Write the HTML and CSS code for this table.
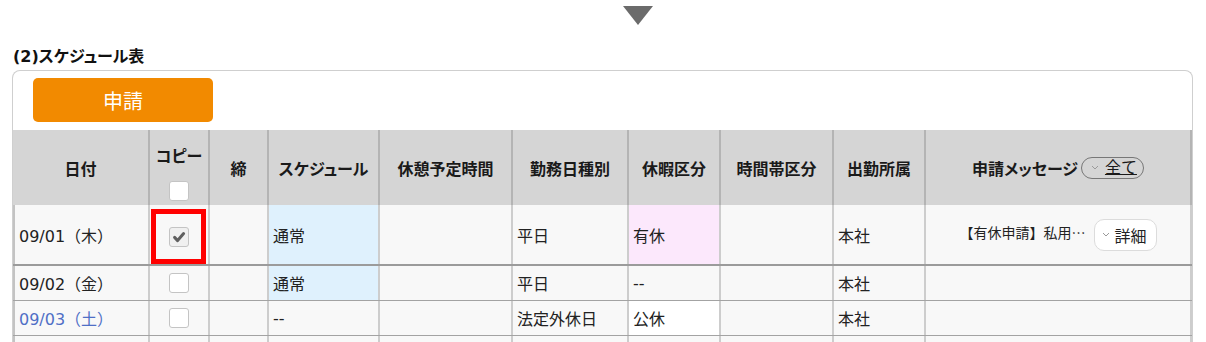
FILE: index.html
```html
<!DOCTYPE html>
<html lang="ja">
<head>
<meta charset="utf-8">
<title>スケジュール表</title>
<link rel="stylesheet" href="styles.css">
</head>
<body>
<div class="arrow"></div>
<h2 class="title">(2)スケジュール表</h2>
<div class="panel">
  <div class="actions"><button class="apply">申請</button></div>
  <div class="table">
    <div class="row head">
      <div class="th">日付</div>
      <div class="th th-copy"><span class="th-label">コピー</span><span class="cb"></span></div>
      <div class="th">締</div>
      <div class="th">スケジュール</div>
      <div class="th">休憩予定時間</div>
      <div class="th">勤務日種別</div>
      <div class="th">休暇区分</div>
      <div class="th">時間帯区分</div>
      <div class="th">出勤所属</div>
      <div class="th th-msg">申請メッセージ<span class="pill"><svg class="chev" width="8" height="5" viewBox="0 0 8 5"><polyline points="1,1 4,4 7,1" fill="none" stroke="#9a9a9a" stroke-width="1"/></svg><span class="pill-text">全て</span></span></div>
    </div>
    <div class="row body r1">
      <div class="td">09/01（木）</div>
      <div class="td center copy-cell">
        <span class="cb checked"><svg width="18" height="18" viewBox="0 0 18 18"><path d="M4.6 9.4 L7.6 12.6 L13.6 5.6" fill="none" stroke="#5f5f5f" stroke-width="3" stroke-linecap="round" stroke-linejoin="round"/></svg></span>
        <span class="highlight"></span>
      </div>
      <div class="td"></div>
      <div class="td blue">通常</div>
      <div class="td"></div>
      <div class="td">平日</div>
      <div class="td pink">有休</div>
      <div class="td"></div>
      <div class="td">本社</div>
      <div class="td msg"><span class="msg-text">【有休申請】私用…</span><span class="detail"><svg class="chev" width="8" height="5" viewBox="0 0 8 5"><polyline points="1,1 4,4 7,1" fill="none" stroke="#9a9a9a" stroke-width="1"/></svg>詳細</span></div>
    </div>
    <div class="row body r2">
      <div class="td">09/02（金）</div>
      <div class="td center"><span class="cb"></span></div>
      <div class="td"></div>
      <div class="td blue">通常</div>
      <div class="td"></div>
      <div class="td">平日</div>
      <div class="td">--</div>
      <div class="td"></div>
      <div class="td">本社</div>
      <div class="td"></div>
    </div>
    <div class="row body r3">
      <div class="td sat">09/03（土）</div>
      <div class="td center"><span class="cb"></span></div>
      <div class="td"></div>
      <div class="td">--</div>
      <div class="td"></div>
      <div class="td">法定外休日</div>
      <div class="td white">公休</div>
      <div class="td"></div>
      <div class="td">本社</div>
      <div class="td"></div>
    </div>
    <div class="row body r4">
      <div class="td"></div>
      <div class="td"></div>
      <div class="td"></div>
      <div class="td"></div>
      <div class="td"></div>
      <div class="td"></div>
      <div class="td"></div>
      <div class="td"></div>
      <div class="td"></div>
      <div class="td"></div>
    </div>
  </div>
</div>
</body>
</html>
```

FILE: styles.css
```css
body {
  margin: 0;
  background: #fff;
  color: #222;
  font-family: "DejaVu Sans", "Noto Sans CJK JP", sans-serif;
}

.arrow {
  width: 0;
  height: 0;
  margin: 6px 0 0 623px;
  border-left: 15px solid transparent;
  border-right: 15px solid transparent;
  border-top: 19px solid #6b6b6b;
}

.title {
  margin: 21px 0 2px 13px;
  font-size: 16px;
  line-height: 22px;
  font-weight: bold;
  font-feature-settings: "palt";
  color: #111;
}

.panel {
  margin-left: 12px;
  width: 1181px;
  box-sizing: border-box;
  border: 1px solid #cfcfcf;
  border-bottom: none;
  border-radius: 8px 8px 0 0;
}

.actions {
  padding: 7px 20px 8px;
}

.apply {
  width: 180px;
  height: 44px;
  border: none;
  border-radius: 5px;
  background: #f28a00;
  color: #fff;
  font-family: inherit;
  font-size: 20px;
  display: flex;
  align-items: center;
  justify-content: center;
  padding: 0;
}

.row {
  display: grid;
  grid-template-columns: 137px 60px 59px 111px 133px 116px 92px 113px 92px 266px;
  box-sizing: border-box;
}

.head {
  height: 75px;
  background: #d5d5d5;
}

.th {
  border-right: 2px solid #b4b4b4;
  display: flex;
  align-items: center;
  justify-content: center;
  font-weight: bold;
  font-size: 16px;
  font-feature-settings: "palt";
  color: #1a1a1a;
}

.th-msg {
  gap: 3px;
}

.th-copy {
  flex-direction: column;
  justify-content: flex-start;
  padding-top: 16px;
}

.th-label {
  line-height: 22px;
  margin-bottom: 13px;
}

.pill {
  display: inline-flex;
  align-items: center;
  height: 22px;
  box-sizing: border-box;
  padding: 0 6px 0 9px;
  border: 1px solid #777;
  border-radius: 11px;
  font-weight: normal;
  font-feature-settings: normal;
}

.pill-text {
  margin-left: 6px;
  text-decoration: underline;
  line-height: 18px;
}

.chev {
  display: block;
}

.body {
  background: #f8f8f8;
}

.td {
  border-right: 2px solid #cdcdcd;
  display: flex;
  align-items: center;
  padding: 0 4px;
  font-size: 16px;
  box-sizing: border-box;
}

.td:first-child {
  border-left: 2px solid #c3c3c3;
}

.r1 {
  height: 61px;
  border-bottom: 2px solid #9b9b9b;
}

.r2,
.r3 {
  height: 35px;
  border-bottom: 1px solid #a3a3a3;
}

.r4 {
  height: 35px;
}

.center {
  justify-content: center;
}

.copy-cell {
  position: relative;
  padding-top: 5px;
}

.highlight {
  position: absolute;
  top: 4px;
  left: 1px;
  width: 55px;
  height: 55px;
  box-sizing: border-box;
  border: 5px solid #ff0000;
}

.cb {
  display: flex;
  align-items: center;
  justify-content: center;
  width: 20px;
  height: 20px;
  box-sizing: border-box;
  border: 1px solid #c4c4c4;
  border-radius: 3px;
  background: #fff;
}

.cb.checked {
  background: #f0f0f0;
}

.blue {
  background: #dff1fd;
}

.pink {
  background: #fce8fc;
}

.white {
  background: #fff;
}

.sat {
  color: #4f6fc6;
}

.msg {
  justify-content: center;
  gap: 9px;
}

.msg-text {
  font-family: "Noto Sans CJK JP", sans-serif;
  font-size: 14px;
  margin-bottom: 6px;
}

.detail {
  display: inline-flex;
  align-items: center;
  gap: 4px;
  height: 32px;
  box-sizing: border-box;
  padding: 0 9px 0 7px;
  border: 1px solid #dcdcdc;
  border-radius: 10px;
  background: #fff;
  font-size: 16px;
}
```
